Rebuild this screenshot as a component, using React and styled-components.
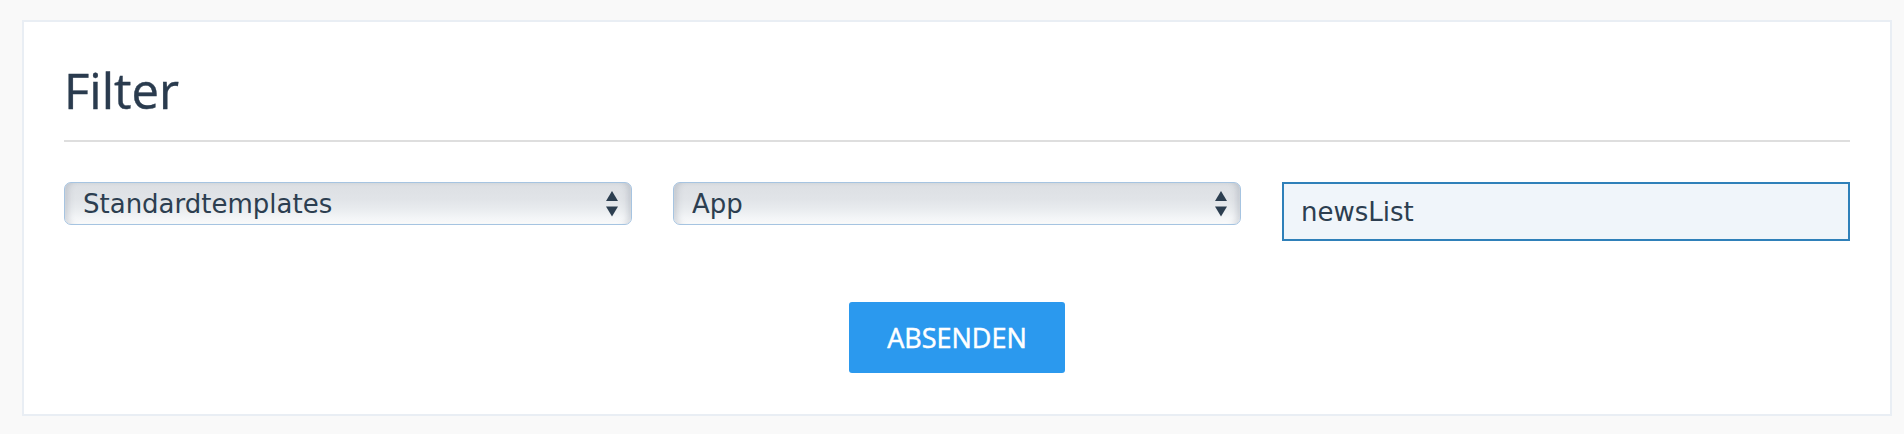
import React from "react";
import styled, { createGlobalStyle } from "styled-components";

const Global = createGlobalStyle`
  html, body { margin: 0; padding: 0; background: #f9f9f9; }
  body { font-family: "Open Sans", "DejaVu Sans", sans-serif; }
  * { box-sizing: border-box; }
`;

const Page = styled.div`
  padding: 20px 12px 16px 22px;
`;

const Card = styled.section`
  background: #ffffff;
  border: 2px solid #e9eef4;
  padding: 37px 40px 41px 40px;
`;

const Heading = styled.h2`
  margin: 0;
  font-family: "Open Sans", sans-serif;
  font-weight: 400;
  font-size: 49px;
  line-height: 60px;
  padding-top: 1px;
  height: 60px;
  color: #2a3b4e;
  -webkit-text-stroke: 0.4px #2a3b4e;
`;

const Rule = styled.div`
  margin-top: 21px;
  height: 2px;
  background: #dedede;
`;

const Fields = styled.div`
  margin-top: 40px;
  display: grid;
  grid-template-columns: repeat(3, 1fr);
  column-gap: 41px;
  align-items: start;
`;

const SelectWrap = styled.div`
  position: relative;
  height: 43px;
`;

const Select = styled.select`
  appearance: none;
  -webkit-appearance: none;
  width: 100%;
  height: 43px;
  margin: 0;
  padding: 0 40px 0 18px;
  border: 1.5px solid #a6c4e1;
  border-radius: 7px;
  font-family: "DejaVu Sans", sans-serif;
  font-size: 26px;
  color: #2c3e50;
  background: linear-gradient(
    to bottom,
    #dcdfe3 0%,
    #e1e4e8 40%,
    #e8ebee 62%,
    #f3f5f7 85%,
    #f9fafb 100%
  );
  box-shadow: inset 7px 0 6px -4px rgba(120, 130, 145, 0.3),
    inset -7px 0 6px -4px rgba(120, 130, 145, 0.3),
    inset 0 -2px 2px rgba(255, 255, 255, 0.9);
  outline: none;
`;

const Arrows = styled.svg`
  position: absolute;
  right: 14px;
  top: 9px;
  width: 12px;
  height: 26px;
  pointer-events: none;
`;

const TextInput = styled.input`
  width: 100%;
  height: 59px;
  margin: 0;
  padding: 0 17px;
  border: 2px solid #2f80b9;
  border-radius: 0;
  background: #f0f5fa;
  font-family: "DejaVu Sans", sans-serif;
  font-size: 26px;
  color: #2c3e50;
  outline: none;
`;

const Actions = styled.div`
  margin-top: 61px;
  display: flex;
  justify-content: center;
`;

const Submit = styled.button`
  width: 216px;
  height: 71px;
  border: none;
  border-radius: 3px;
  background: #2b99ee;
  color: #ffffff;
  font-family: "Open Sans", sans-serif;
  font-size: 27px;
  font-weight: 400;
  -webkit-text-stroke: 0.5px #ffffff;
  text-transform: uppercase;
  cursor: pointer;
  padding: 0;
`;

function SelectField({ value, options }) {
  return (
    <SelectWrap>
      <Select defaultValue={value}>
        {options.map((o) => (
          <option key={o} value={o}>
            {o}
          </option>
        ))}
      </Select>
      <Arrows viewBox="0 0 12 26">
        <polygon points="6,0 12,10 0,10" fill="#2c3e50" />
        <polygon points="0,15.5 12,15.5 6,25.5" fill="#2c3e50" />
      </Arrows>
    </SelectWrap>
  );
}

export default function App() {
  return (
    <>
      <Global />
      <Page>
        <Card>
          <Heading>Filter</Heading>
          <Rule />
          <Fields>
            <SelectField
              value="Standardtemplates"
              options={["Standardtemplates", "Eigene Templates"]}
            />
            <SelectField value="App" options={["App", "Core", "Plugin"]} />
            <TextInput defaultValue="newsList" />
          </Fields>
          <Actions>
            <Submit type="submit">Absenden</Submit>
          </Actions>
        </Card>
      </Page>
    </>
  );
}
